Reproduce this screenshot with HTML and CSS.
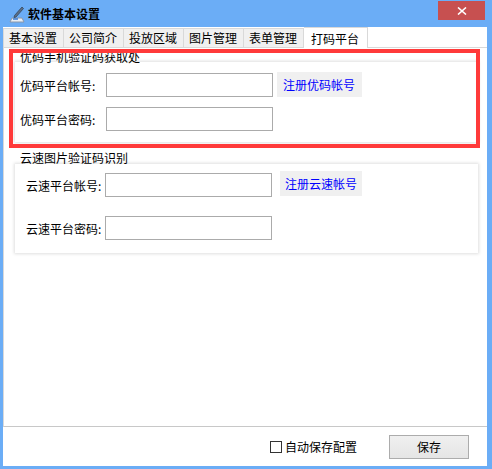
FILE: index.html
```html
<!DOCTYPE html>
<html lang="zh-CN">
<head>
  <meta charset="UTF-8">
  <title>软件基本设置</title>
  <link rel="stylesheet" href="styles.css">
</head>
<body>
<div class="window">
  <div class="titlebar">
    <svg class="app-icon" width="16" height="17" viewBox="0 0 16 17">
      <path d="M3 12 L13 12 L15 16 L1 16 Z" fill="#e8eef5" stroke="#8a97a8" stroke-width="1"/>
      <path d="M13 1 L14.5 2.5 L7 11 L5 11.5 L5.5 9.5 Z" fill="#5d6f86" stroke="#34465c" stroke-width="0.8"/>
      <path d="M4 13 L9 13" stroke="#3a7bd5" stroke-width="1.5"/>
    </svg>
    <span class="title">软件基本设置</span>
    <button class="close-btn">
      <svg width="10" height="8" viewBox="0 0 10 8">
        <path d="M1 0.5 L9 7.5 M9 0.5 L1 7.5" stroke="#fff" stroke-width="1.6"/>
      </svg>
    </button>
  </div>

  <div class="client">
    <div class="tabs">
      <div class="tab">基本设置</div>
      <div class="tab">公司简介</div>
      <div class="tab">投放区域</div>
      <div class="tab">图片管理</div>
      <div class="tab">表单管理</div>
      <div class="tab active">打码平台</div>
    </div>

    <div class="tab-panel">
      <div class="highlight"></div>

      <div class="group">
        <div class="group-title">优码手机验证码获取处</div>
        <div class="group-box youma">
          <div class="row">
            <label>优码平台帐号:</label>
            <input type="text">
            <button class="link-btn">注册优码帐号</button>
          </div>
          <div class="row">
            <label>优码平台密码:</label>
            <input type="password">
          </div>
        </div>
      </div>

      <div class="group second">
        <div class="group-title">云速图片验证码识别</div>
        <div class="group-box yunsu">
          <div class="row">
            <label>云速平台帐号:</label>
            <input type="text">
            <button class="link-btn">注册云速帐号</button>
          </div>
          <div class="row">
            <label>云速平台密码:</label>
            <input type="password">
          </div>
        </div>
      </div>
    </div>

    <div class="footer">
      <label class="check"><span class="box"></span>自动保存配置</label>
      <button class="save-btn">保存</button>
    </div>
  </div>
</div>
</body>
</html>
```

FILE: styles.css
```css
* {
  box-sizing: border-box;
}
body {
  margin: 0;
  font-family: "Noto Sans CJK SC", "Liberation Sans", sans-serif;
  font-size: 12px;
  color: #000;
}
.window {
  width: 492px;
  height: 469px;
  background-color: #6badf6;
  padding: 0 5px 3px 3px;
  display: flex;
  flex-direction: column;
}
.titlebar {
  height: 27px;
  display: flex;
  align-items: center;
  position: relative;
}
.app-icon {
  margin-left: 6px;
  margin-top: 2px;
}
.title {
  margin-left: 3px;
  font-weight: bold;
  font-size: 12px;
  line-height: 14px;
}
.close-btn {
  position: absolute;
  top: 1px;
  right: 2px;
  width: 47px;
  height: 19px;
  border: none;
  background-color: #c75050;
  padding: 0;
  display: flex;
  align-items: center;
  justify-content: center;
}
.client {
  flex: 1;
  background-color: #fff;
  display: flex;
  flex-direction: column;
}
.tabs {
  height: 20px;
  display: flex;
  align-items: flex-end;
}
.tab {
  height: 19px;
  line-height: 18px;
  padding: 0 6px 0 5px;
  background-color: #f0f0f0;
  border: 1px solid #d9d9d9;
  border-bottom: none;
  border-left: none;
}
.tab:first-child {
  border-left: 1px solid #d9d9d9;
}
.tab.active {
  height: 21px;
  line-height: 21px;
  padding: 0 8px 0 7px;
  margin-bottom: -1px;
  background-color: #fff;
  position: relative;
  z-index: 1;
}
.tab-panel {
  height: 380px;
  border-top: 1px solid #d9d9d9;
  border-left: 1px solid #d9d9d9;
  border-bottom: 1px solid #c8c8c8;
  padding: 2px 9px 0 11px;
  position: relative;
}
.highlight {
  position: absolute;
  left: 5px;
  top: 1px;
  width: 471px;
  height: 99px;
  border: 4px solid #ff3a3a;
  z-index: 2;
}
.group-title {
  line-height: 14px;
  padding-left: 5px;
  margin-bottom: -2px;
}
.group.second {
  margin-top: 9px;
}
.group.second .group-title {
  margin-bottom: -1px;
}
.group-box {
  background-color: #fff;
  box-shadow: 0 0 3px 1px rgba(0, 0, 0, 0.13);
  display: flex;
  flex-direction: column;
}
.youma {
  padding: 11px 0 11px 5px;
  gap: 10px;
}
.yunsu {
  padding: 9px 0 13px 11px;
  gap: 19px;
}
.row {
  display: flex;
  align-items: center;
  height: 24px;
}
.youma label {
  width: 86px;
}
.yunsu label {
  width: 79px;
}
.row input {
  width: 167px;
  height: 24px;
  border: 1px solid #ababab;
  padding: 0 3px;
  font: inherit;
  outline: none;
}
.link-btn {
  height: 25px;
  margin-left: 4px;
  padding: 0 7px 0 6px;
  border: none;
  background-color: #f0f0f0;
  color: #0000ff;
  font: inherit;
  line-height: 25px;
  margin-top: -1px;
}
.yunsu .link-btn {
  margin-left: 8px;
  padding: 0 5px 0 5px;
  margin-top: -4px;
}
.footer {
  flex: 1;
  display: flex;
  align-items: center;
  justify-content: flex-end;
  padding-right: 18px;
}
.check {
  display: flex;
  align-items: center;
  line-height: 14px;
}
.box {
  width: 12px;
  height: 12px;
  border: 1px solid #333;
  background-color: #fff;
  margin-right: 3px;
}
.save-btn {
  width: 80px;
  height: 24px;
  margin-left: 32px;
  border: 1px solid #acacac;
  background: linear-gradient(#f0f0f0, #e5e5e5);
  font: inherit;
  color: #000;
  padding: 0;
}
```
